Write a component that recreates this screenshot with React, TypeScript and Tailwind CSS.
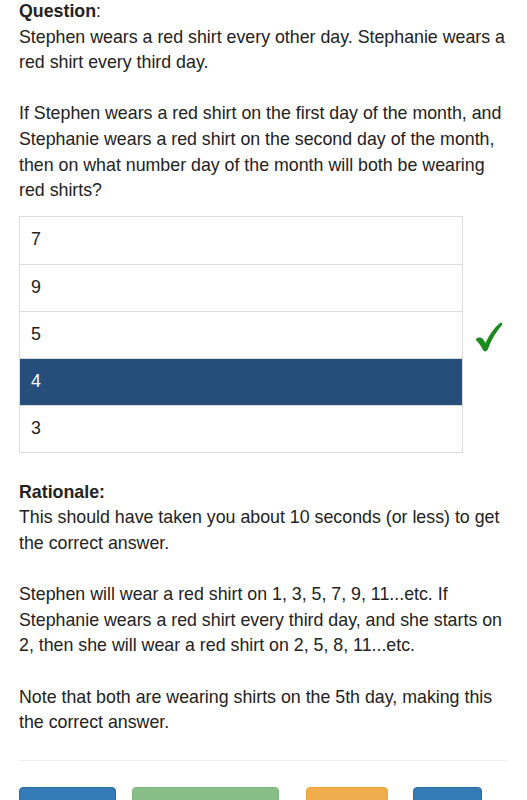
import React from 'react';

const answers = [
  { label: '7', selected: false, correct: false },
  { label: '9', selected: false, correct: false },
  { label: '5', selected: false, correct: true },
  { label: '4', selected: true, correct: false },
  { label: '3', selected: false, correct: false },
];

function CheckMark() {
  return (
    <svg width="28" height="30" viewBox="0 0 28 30" className="block">
      <path
        d="M1 17 C3 15 6 15 8 17 L10.5 21 C14 13 19 6 25 1 C27 0 28 2 27 3 C21 10 16 18 13 27 C12 30 9 30 8 28 C6 24 4 21 1 18 Z"
        fill="#1b8a1e"
      />
    </svg>
  );
}

export default function App() {
  return (
    <div
      className="w-[527px] h-[800px] overflow-hidden bg-white text-[#222] text-[17.8px] leading-[25.6px] pl-[19px] pr-[20px]"
      style={{ fontFamily: '"Liberation Sans", Arial, sans-serif' }}
    >
      <div className="-mt-[1px]">
        <span className="font-bold">Question</span>:
      </div>
      <p>Stephen wears a red shirt every other day. Stephanie wears a red shirt every third day.</p>
      <p className="mt-[25.6px]">
        If Stephen wears a red shirt on the first day of the month, and Stephanie wears a red shirt on the
        second day of the month, then on what number day of the month will both be wearing red shirts?
      </p>

      <div className="mt-[12px] flex items-start">
        <div className="w-[444px] border border-[#dcdcdc]">
          {answers.map((a, i) => (
            <div
              key={a.label}
              className={
                'h-[47px] flex items-center pl-[11px] ' +
                (i > 0 ? 'border-t border-[#dcdcdc] ' : '') +
                (a.selected ? 'bg-[#264e7b] text-white' : 'bg-white')
              }
            >
              {a.label}
            </div>
          ))}
        </div>
        <div className="ml-[12px] pt-[106px]">
          <CheckMark />
        </div>
      </div>

      <div className="mt-[27px]">
        <div className="font-bold">Rationale:</div>
        <p>This should have taken you about 10 seconds (or less) to get the correct answer.</p>
        <p className="mt-[25.6px]">
          Stephen will wear a red shirt on 1, 3, 5, 7, 9, 11...etc. If Stephanie wears a red shirt every third
          day, and she starts on 2, then she will wear a red shirt on 2, 5, 8, 11...etc.
        </p>
        <p className="mt-[25.6px]">
          Note that both are wearing shirts on the 5th day, making this the correct answer.
        </p>
      </div>

      <hr className="mt-[24px] border-t border-[#eeeeee]" />

      <div className="mt-[26px] flex">
        <div className="w-[97px] h-[40px] rounded-[4px] bg-[#337ab7] border border-[#2e6da4]" />
        <div className="ml-[16px] w-[147px] h-[40px] rounded-[4px] bg-[#88bd87] border border-[#7fb77e]" />
        <div className="ml-[27px] w-[82px] h-[40px] rounded-[4px] bg-[#f0ad4e] border border-[#eea236]" />
        <div className="ml-[25px] w-[69px] h-[40px] rounded-[4px] bg-[#337ab7] border border-[#2e6da4]" />
      </div>
    </div>
  );
}
